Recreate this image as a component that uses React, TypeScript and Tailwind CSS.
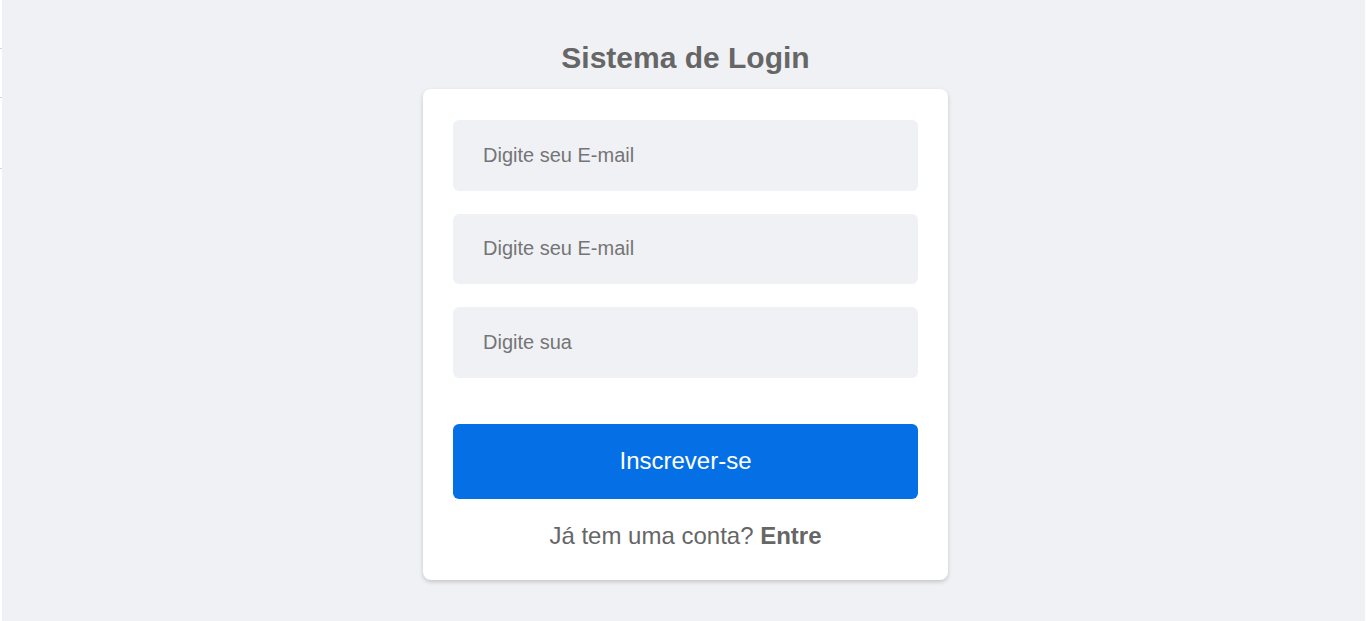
const fields = ["Digite seu E-mail", "Digite seu E-mail", "Digite sua"];

const App = () => {
  return (
    <div className="flex h-[621px] w-full bg-white font-['Liberation_Sans',Arial,sans-serif]">
      <div className="flex w-[2px] flex-col bg-white">
        <div className="h-[48px]" />
        <div className="h-px bg-gray-300" />
        <div className="h-[48px]" />
        <div className="h-px bg-gray-300" />
        <div className="h-[70px]" />
        <div className="h-px bg-gray-300" />
      </div>

      <main className="flex flex-1 flex-col items-center bg-[#f0f1f5] pl-[4px] pt-[41px]">
        <h1 className="mb-[14px] text-[30px] font-bold leading-[34px] text-[#666]">Sistema de Login</h1>

        <div className="flex w-[525px] flex-col rounded-lg bg-white px-[30px] pb-[30px] pt-[31px] shadow-[0_2px_4px_rgba(0,0,0,0.18)]">
          <div className="flex flex-col gap-[23px]">
            {fields.map((placeholder, i) => (
              <input
                key={i}
                type="text"
                placeholder={placeholder}
                className="block h-[70.5px] w-full rounded-md bg-[#f0f1f5] px-[30px] text-[20px] text-[#555] outline-none placeholder:text-[#757575]"
              />
            ))}
          </div>

          <button className="mt-[46px] block h-[75px] w-full rounded-md bg-[#0570e6] text-[24px] text-white">
            Inscrever-se
          </button>

          <p className="mt-[23px] text-center text-[24px] leading-[28px] text-[#666]">
            Já tem uma conta? <span className="font-bold">Entre</span>
          </p>
        </div>
      </main>

      <div className="w-px bg-white" />
    </div>
  );
};

export default App;
